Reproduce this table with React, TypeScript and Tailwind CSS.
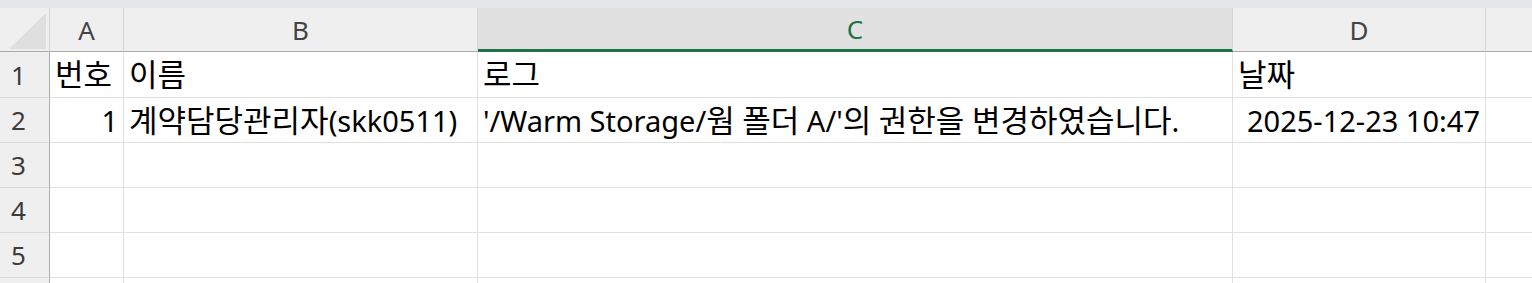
const FONT = "font-['Noto_Sans','Noto_Sans_CJK_KR',sans-serif]";

type Col = { key: string; width: string; selected?: boolean };
type Cell = { text: string; right?: boolean };

const cols: Col[] = [
  { key: "A", width: "w-[74px]" },
  { key: "B", width: "w-[354px]" },
  { key: "C", width: "w-[755px]", selected: true },
  { key: "D", width: "w-[253px]" },
];

const rows: { height: string; cells: Cell[] }[] = [
  { height: "h-[46px]", cells: [{ text: "번호" }, { text: "이름" }, { text: "로그" }, { text: "날짜" }] },
  {
    height: "h-[45px]",
    cells: [
      { text: "1", right: true },
      { text: "계약담당관리자(skk0511)" },
      { text: "'/Warm Storage/웜 폴더 A/'의 권한을 변경하였습니다." },
      { text: "2025-12-23 10:47", right: true },
    ],
  },
  { height: "h-[45px]", cells: [] },
  { height: "h-[45px]", cells: [] },
  { height: "h-[45px]", cells: [] },
  { height: "h-[45px]", cells: [] },
];

// hangul runs a touch larger so syllable widths match the sheet's font
function CellText({ text }: { text: string }) {
  return (
    <span>
      {text.split(/([\uAC00-\uD7A3]+)/).map((part, i) =>
        /[\uAC00-\uD7A3]/.test(part) ? (
          <span key={i} className="text-[31px]">{part}</span>
        ) : (
          part
        )
      )}
    </span>
  );
}

export default function App() {
  return (
    <div className={`w-[1532px] h-[283px] overflow-hidden bg-white ${FONT}`}>
      <div className="h-[8px] bg-[#e3e7ea]" />

      {/* column headers */}
      <div className="flex h-[44px] bg-[#efefef]">
        <div className="relative w-[50px] shrink-0 border-r border-b border-r-[#d6d6d6] border-b-[#ababab]">
          <svg className="absolute left-0 top-0" width="49" height="43" viewBox="0 0 49 43">
            <polygon points="9,41 46,41 46,5" fill="#dfdfdf" />
          </svg>
        </div>
        {cols.map((c) => (
          <div
            key={c.key}
            className={`${c.width} shrink-0 flex items-center justify-center border-r border-r-[#d6d6d6] text-[26px] leading-none ${
              c.selected
                ? "bg-[#e1e1e1] border-b-[3px] border-b-[#217346] text-[#217346]"
                : "border-b border-b-[#ababab] text-[#444444]"
            }`}
          >
            {c.key}
          </div>
        ))}
        <div className="flex-1 border-b border-b-[#ababab]" />
      </div>

      {/* rows */}
      {rows.map((r, i) => (
        <div key={i} className={`flex ${r.height} shrink-0`}>
          <div className="w-[50px] shrink-0 flex items-center justify-center pr-[12px] bg-[#efefef] border-r border-b border-r-[#ababab] border-b-[#d9d9d9] text-[26px] leading-none text-[#3c3c3c]">
            {i < 5 ? i + 1 : null}
          </div>
          {cols.map((c, j) => {
            const cell = r.cells[j];
            return (
              <div
                key={c.key}
                className={`${c.width} shrink-0 flex items-center border-r border-b border-[#e1e1e1] whitespace-nowrap text-[29px] leading-none text-black ${
                  cell?.right ? "justify-end pr-[5px]" : "justify-start pl-[5px]"
                }`}
              >
                {cell && <CellText text={cell.text} />}
              </div>
            );
          })}
          <div className="flex-1 border-b border-[#e1e1e1]" />
        </div>
      ))}
    </div>
  );
}
